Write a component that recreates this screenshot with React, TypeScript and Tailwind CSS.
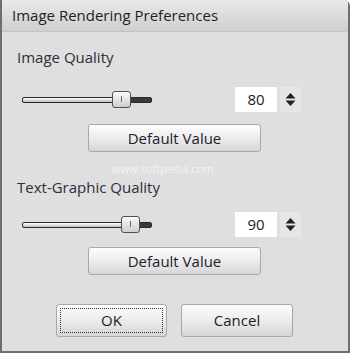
import React from 'react';

const font = { fontFamily: '"Open Sans", "Noto Sans", sans-serif' };

const Slider: React.FC<{ pos: number }> = ({ pos }) => (
    <div className="relative w-[130px] h-[18px] flex items-center">
        <div className="w-full h-[6px] rounded-[2px] border border-[#2a2a2a] bg-[#3a3a3a] overflow-hidden flex">
            <div className="h-full bg-gradient-to-b from-[#ffffff] to-[#bcbcbc]" style={{ width: pos }} />
        </div>
        <div
            className="absolute top-0 w-[19px] h-[17px] rounded-[3px] border border-[#505050] bg-gradient-to-b from-[#fafafa] to-[#cfcfcf] flex items-center justify-center"
            style={{ left: pos - 2 }}
        >
            <div className="w-px h-[6px] bg-[#6a6a6a]" />
        </div>
    </div>
);

const Spinner: React.FC<{ value: number }> = ({ value }) => (
    <div className="flex items-center">
        <div className="w-[42px] h-[25px] bg-white flex items-center justify-center text-[15px] text-[#222]">{value}</div>
        <div className="ml-[3px] w-[21px] h-[25px] bg-[#e6e6e6] flex items-center justify-center">
            <svg width="11" height="15" viewBox="0 0 11 15">
                <path d="M5.5 1 L10.5 6.5 L0.5 6.5 Z" fill="#222" />
                <path d="M5.5 14 L10.5 8.5 L0.5 8.5 Z" fill="#222" />
            </svg>
        </div>
    </div>
);

const Button: React.FC<{ label: string; className: string; focus?: boolean }> = ({ label, className, focus }) => (
    <button
        className={`${className} rounded-[3px] border border-[#a8a8a8] bg-gradient-to-b from-[#fdfdfd] via-[#ececec] to-[#d6d6d6] text-[15px] text-[#1c1c2c] flex items-center justify-center p-[3px]`}
    >
        <span className={`w-full h-full flex items-center justify-center ${focus ? 'border border-dotted border-[#333]' : ''}`}>
            {label}
        </span>
    </button>
);

export default function App() {
    return (
        <div className="w-[350px] h-[353px] bg-[#6e6e6e] pl-[2px] pr-[2px] pb-[2px] rounded-tr-[6px] overflow-hidden" style={font}>
            <div className="h-full flex flex-col bg-[#dfdfdf] rounded-tr-[5px]">
                <div className="h-[32px] shrink-0 bg-gradient-to-b from-[#e9e9e9] to-[#cfcfcf] border-b border-[#c4c4c4] flex items-center pl-[10px] text-[15px] text-[#1e1e28]">
                    Image Rendering Preferences
                </div>

                <div className="relative flex-1 flex flex-col pl-[15px]">
                    <div className="mt-[15px] h-[20px] text-[15px] text-[#2e2e3a] leading-[20px]">Image Quality</div>
                    <div className="mt-[20px] flex items-center">
                        <div className="ml-[5px]"><Slider pos={92} /></div>
                        <div className="ml-[83px]"><Spinner value={80} /></div>
                    </div>
                    <div className="mt-[12px] ml-[71px]"><Button label="Default Value" className="w-[173px] h-[28px]" /></div>

                    <div className="mt-[25px] h-[20px] text-[15px] text-[#2e2e3a] leading-[20px]">Text-Graphic Quality</div>
                    <div className="mt-[15px] flex items-center">
                        <div className="ml-[5px]"><Slider pos={101} /></div>
                        <div className="ml-[83px]"><Spinner value={90} /></div>
                    </div>
                    <div className="mt-[10px] ml-[71px]"><Button label="Default Value" className="w-[173px] h-[28px]" /></div>

                    <div className="mt-[29px] ml-[39px] flex gap-[14px]">
                        <Button label="OK" className="w-[111px] h-[33px]" focus />
                        <Button label="Cancel" className="w-[112px] h-[33px]" />
                    </div>

                    <div className="absolute left-[110px] top-[131px] text-[11px] leading-[12px] text-white/60 pointer-events-none">www.softpedia.com</div>
                </div>
            </div>
        </div>
    );
}
